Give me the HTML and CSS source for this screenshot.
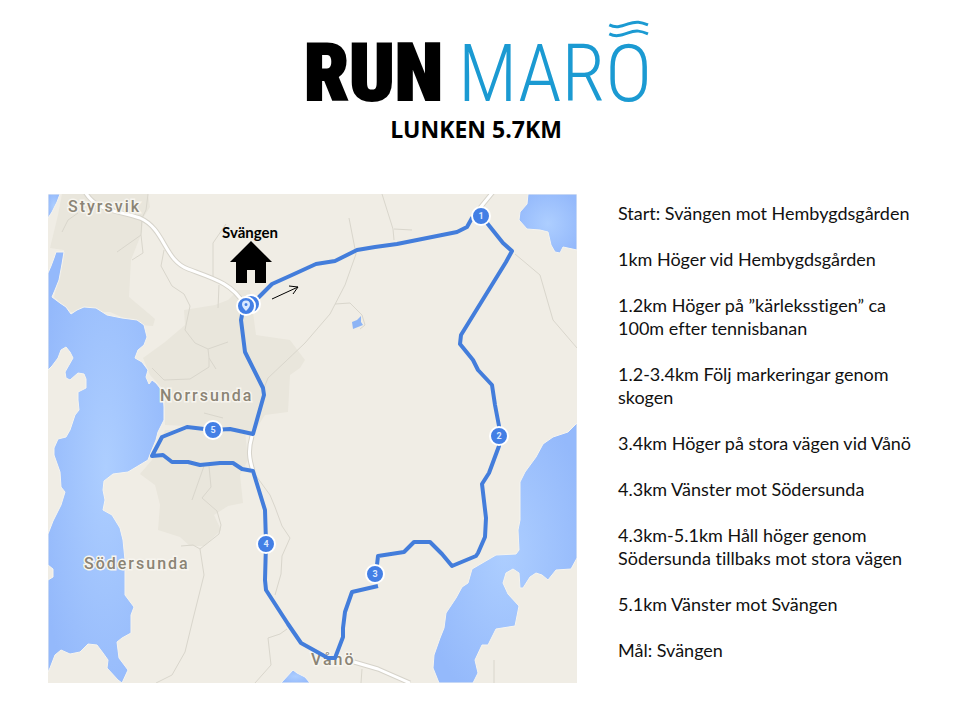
FILE: index.html
```html
<!DOCTYPE html>
<html lang="sv">
<head>
<meta charset="utf-8">
<meta name="viewport" content="width=device-width, initial-scale=1">
<title>Runmarö – Lunken 5.7km</title>
<link rel="stylesheet" href="styles.css">
</head>
<body>
<header class="header">
  <svg class="logo" viewBox="300 18 354 88" role="img" aria-label="Runmarö">
    <text class="logo-run" x="303" y="101">RUN</text>
    <text class="logo-maro" x="654" y="102">MARO</text>
    <g class="logo-waves">
      <path d="M611 25C617 28 622 27 630 24S643 22 650 25"/>
      <path d="M611 34C617 37 622 36 630 33S643 31 650 34"/>
    </g>
  </svg>
  <h1 class="title">LUNKEN 5.7KM</h1>
</header>
<main class="content">
  <svg class="map" viewBox="48 194 529 489" role="img" aria-label="Karta över banan">
    <defs>
      <radialGradient id="lake" cx="0.5" cy="0.5" r="0.6">
        <stop offset="0" stop-color="#adceff"/>
        <stop offset="1" stop-color="#94b9fb"/>
      </radialGradient>
    </defs>
    <rect class="land" x="48" y="194" width="529" height="489"/>
    <g class="woods">
      <path d="M62 194L148 194L150 207L143 218L142 232L131 260L129 297L148 313L155 319L153 326L140 325L110 312L71 312L54 297L62 265L64 250L50 248L58 215Z"/>
      <path d="M184 310L215 305L228 300L238 290L250 290L256 335L290 340L305 360L300 368L290 375L288 412L265 415L252 435L230 428L165 425L164 390L150 375L143 358L165 342L185 325Z"/>
      <path d="M165 430L245 430L248 460L240 475L243 503L228 506L214 515L221 530L204 546L190 546L180 537L158 530L160 505L155 485L140 474L152 460Z"/>
    </g>
    <g class="water">
      <path d="M48 194L60 194L57 202L52 212L48 218Z"/>
      <path d="M56 252L64 252L62 264L59 280L55 290L52 297L60 303L66 307L71 314L77 310L84 307L96 308L107 315L122 318L137 320L144 325L147 337L144 345L138 350L135 358L142 362L148 370L146 377L149 384L152 380L156 383L160 388L163 393L164 407L164 420L158 432L156 440L151 452L148 460L138 466L128 472L113 474L104 481L103 490L105 500L103 510L112 515L120 528L123 540L125 560L125 595L134 607L131 615L131 633L122 638L117 642L119 658L128 670L122 683L118 680L107 668L108 660L103 653L97 645L88 644L80 652L70 654L61 650L55 655L50 668L48 672L48 580L53 577L53 569L48 565L48 534L53 521L61 505L65 492L61 487L60 472L54 455L54 448L58 439L66 437L70 430L75 415L79 410L78 400L78 392L86 388L86 379L84 374L78 373L70 380L66 378L65 372L69 365L73 358L70 352L66 347L61 350L58 358L52 366L48 370L48 273L51 266L54 258Z"/>
      <path d="M528 194L527 204L520 212L519 220L527 229L540 230L548 232L551 245L555 252L560 253L563 247L577 250L577 194Z"/>
      <path d="M577 423L568 432L553 437L543 444L536 457L525 472L520 482L520 520L518 530L519 550L516 554L496 555L472 569L468 583L462 587L456 598L446 613L444 628L440 638L434 655L433 668L439 683L473 683L478 673L475 660L482 645L488 645L496 629L515 626L519 606L508 594L503 583L506 573L513 569L519 573L520 588L523 588L530 577L536 573L542 575L548 580L556 570L571 569L577 558Z"/>
      <path d="M281 683L293 670L297 673L305 677L310 683Z"/>
      <path class="pond" d="M352 322L357 320L361 316L361 322L363 325L353 329Z"/>
    </g>
    <g class="paths">
      <path d="M148 194L146 210L142 218L141 235L117 252M141 235L143 253L132 260M78 213L68 220L62 232"/>
      <path d="M226 224L213 243L213 278M219 285L218 308"/>
      <path d="M164 250L161 266L172 286L184 294L190 306L185 330L195 343L208 349L228 342M208 349L209 358L216 369"/>
      <path d="M349 218L356 254L345 285L330 314L305 343L285 362L268 378L264 388M335 304L350 303L362 315L365 325L360 329"/>
      <path d="M382 194L393 229L394 240M394 229L412 230"/>
      <path d="M515 254L540 275L553 320L577 348"/>
      <path d="M152 368L164 380L190 379L209 367L209 358M204 413L223 418"/>
      <path d="M254 473L270 495L275 507L282 526L290 538L282 556L281 574L275 595"/>
      <path d="M204 466L192 500M209 466L211 487L202 498L217 511L221 525L219 534L200 549L204 575L193 619L185 652L172 675L156 683M200 549L193 545L181 546"/>
      <path d="M287 629L280 634L268 638L271 665L255 683"/>
      <path d="M362 669L361 683M494 660L494 683"/>
    </g>
    <g class="road-edge">
      <path d="M84 190C95 211 115 210 140 218C165 229 164 260 188 269S232 283 244 304"/>
      <path d="M493 192L475 214M252 436C248 450 249 458 253 471M354 662L378 669L410 683"/>
    </g>
    <g class="road">
      <path d="M84 190C95 211 115 210 140 218C165 229 164 260 188 269S232 283 244 304"/>
      <path d="M493 192L475 214M252 436C248 450 249 458 253 471M354 662L378 669L410 683"/>
    </g>
    <g class="places">
      <text x="68" y="212">Styrsvik</text>
      <text x="160" y="401">Norrsunda</text>
      <text x="84" y="569">Södersunda</text>
      <text x="311" y="665">Vånö</text>
    </g>
    <path class="route" d="M252 303L259 297L272 284L292 275L316 264L335 261L357 250L375 247L397 244L457 232L467 227L472 218L481 216L487 223L503 243L512 251L506 262L461 335L460 344L473 360L478 370L492 385L495 405L499 426L499 446L489 473L482 484L486 518L485 537L478 553L476 556L452 566L442 554L430 542L414 542L404 552L378 556L377 565"/>
    <path class="route" d="M378 586L352 592L345 612L343 628L343 637L335 658L328 658L301 643L288 624L266 590L265 580L266 543L265 510L253 471L242 469L233 463L220 463L200 465L188 462L172 462L163 455L152 456L162 437L187 427L213 430L230 429L253 434L264 395L263 388L245 352L241 320L243 310"/>
    <g class="markers">
      <circle cx="251" cy="304" r="9"/>
      <circle cx="246" cy="306" r="9"/>
      <circle cx="481" cy="216" r="9"/>
      <circle cx="499" cy="436" r="9"/>
      <circle cx="375" cy="574" r="9"/>
      <circle cx="266" cy="544" r="9"/>
      <circle cx="213" cy="430" r="9"/>
    </g>
    <path class="pin" fill-rule="evenodd" d="M246 311C243 308 242 306 242 304.500A4 4 0 0 1 250 304.500C250 306 249 308 246 311ZM246 306A1.500 1.500 0 1 0 246 303A1.500 1.500 0 1 0 246 306Z"/>
    <g class="numbers">
      <text x="481" y="219">1</text>
      <text x="499" y="439">2</text>
      <text x="375" y="577">3</text>
      <text x="266" y="547">4</text>
      <text x="213" y="433">5</text>
    </g>
    <path class="house" d="M251 241L272 262L266 262L266 283L255 283L255 270L247 270L247 283L236 283L236 262L230 262Z"/>
    <path class="arrow" d="M272 299L298 287M289 286L298 287L293 294"/>
    <text class="start" x="250" y="238">Svängen</text>
  </svg>
  <section class="steps">
    <p>Start: Svängen mot Hembygdsgården</p>
    <p>1km Höger vid Hembygdsgården</p>
    <p>1.2km Höger på ”kärleksstigen” ca 100m efter tennisbanan</p>
    <p>1.2-3.4km Följ markeringar genom skogen</p>
    <p>3.4km Höger på stora vägen vid Vånö</p>
    <p>4.3km Vänster mot Södersunda</p>
    <p>4.3km-5.1km Håll höger genom Södersunda tillbaks mot stora vägen</p>
    <p>5.1km Vänster mot Svängen</p>
    <p>Mål: Svängen</p>
  </section>
</main>
</body>
</html>
```
FILE: styles.css
```css
* { box-sizing: border-box; }
body {
  margin: 0;
  padding: 18px 48px 36px;
  background: #fff;
  color: #111;
  font-family: Lato, "Liberation Sans", sans-serif;
  font-variant-ligatures: none;
}
.header {
  display: flex;
  flex-direction: column;
  align-items: center;
  padding-right: 8px;
}
.logo { width: 41%; height: auto; overflow: visible; }
.logo text {
  font-family: "Roboto Condensed", Roboto, sans-serif;
  font-size: 80px;
}
.logo .logo-run { font-weight: 900; stroke: #000; stroke-width: 2px; }
.logo .logo-maro { font-weight: 300; fill: #1b9ad2; text-anchor: end; }
.logo-waves { fill: none; stroke: #1b9ad2; stroke-width: 3px; }
.title {
  margin: 9px 0 0;
  font: 700 23px/30px "Open Sans", "Noto Sans", sans-serif;
  color: #000;
}
.content {
  display: grid;
  grid-template-columns: 529fr 294fr;
  gap: 41px;
  align-items: start;
  margin-top: 50px;
}
.map { width: 100%; height: auto; display: block; }
.land { fill: #f0ede5; }
.woods { fill: #e9e6dc; }
.water { fill: url(#lake); stroke: #f6f4ee; stroke-width: 1px; }
.water .pond { fill: #8db4f5; stroke: none; }
.paths, .road, .road-edge, .route { fill: none; stroke-linejoin: round; }
.paths { stroke: #d9d6cc; stroke-width: 1px; }
.road-edge { stroke: #d6d3ca; stroke-width: 5px; }
.road { stroke: #fff; stroke-width: 3px; }
.route { stroke: #437ddb; stroke-width: 4px; }
.places text {
  font: 500 16px Roboto, sans-serif;
  letter-spacing: 2px;
  fill: #8b8475;
  stroke: #f7f5ef;
  stroke-width: 3px;
  paint-order: stroke;
}
.markers { fill: #437fe5; stroke: #fff; stroke-width: 2px; }
.pin { fill: #d9e8ff; }
.numbers text { font: 700 9px Roboto, sans-serif; fill: #dce9ff; text-anchor: middle; }
.house { fill: #000; }
.arrow { fill: none; stroke: #000; stroke-width: 1px; }
.start { font: 700 15px Lato, sans-serif; text-anchor: middle; fill: #000; }
.steps {
  display: flex;
  flex-direction: column;
  gap: 23px;
  padding-top: 8px;
  font-size: 18px;
  line-height: 23px;
}
.steps p { margin: 0; }
```
